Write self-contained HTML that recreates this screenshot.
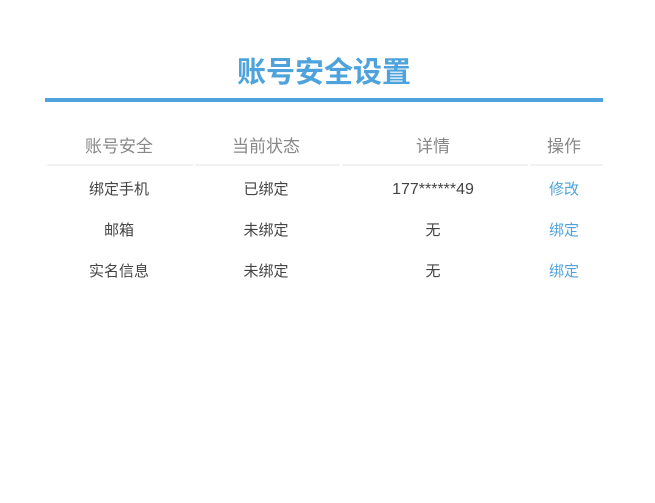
<!DOCTYPE html>
<html><head><meta charset="utf-8"><style>
body{margin:0;width:655px;height:503px;background:#fff;font-family:"Liberation Sans","Noto Sans CJK SC",sans-serif;position:relative}
.t{position:absolute;left:0;width:648px;text-align:center;top:54px;font-size:29px;font-weight:bold;color:#4fa3dc;line-height:38px}
.bar{position:absolute;left:45px;top:98px;width:558px;height:4px;background:#4fa3dc}
.c{position:absolute;text-align:center;transform:translateX(-50%);white-space:nowrap;line-height:20px}
.h{font-size:17px;color:#888;top:137px}
.u{position:absolute;top:164px;height:2px;background:#f2f2f2}
.r{font-size:15px;color:#444}
.n{font-size:16px}
.b{color:#4fa3dc}
</style></head><body>
<div class="t">账号安全设置</div>
<div class="bar"></div>
<div class="c h" style="left:119px">账号安全</div>
<div class="c h" style="left:266px">当前状态</div>
<div class="c h" style="left:433px">详情</div>
<div class="c h" style="left:564px">操作</div>
<div class="u" style="left:47px;width:146px"></div>
<div class="u" style="left:195px;width:145px"></div>
<div class="u" style="left:342px;width:186px"></div>
<div class="u" style="left:530px;width:73px"></div>
<div class="c r" style="left:119px;top:180px">绑定手机</div>
<div class="c r" style="left:266px;top:180px">已绑定</div>
<div class="c r n" style="left:433px;top:180px">177******49</div>
<div class="c r b" style="left:564px;top:180px">修改</div>
<div class="c r" style="left:119px;top:221px">邮箱</div>
<div class="c r" style="left:266px;top:221px">未绑定</div>
<div class="c r" style="left:433px;top:221px">无</div>
<div class="c r b" style="left:564px;top:221px">绑定</div>
<div class="c r" style="left:119px;top:262px">实名信息</div>
<div class="c r" style="left:266px;top:262px">未绑定</div>
<div class="c r" style="left:433px;top:262px">无</div>
<div class="c r b" style="left:564px;top:262px">绑定</div>
</body></html>
